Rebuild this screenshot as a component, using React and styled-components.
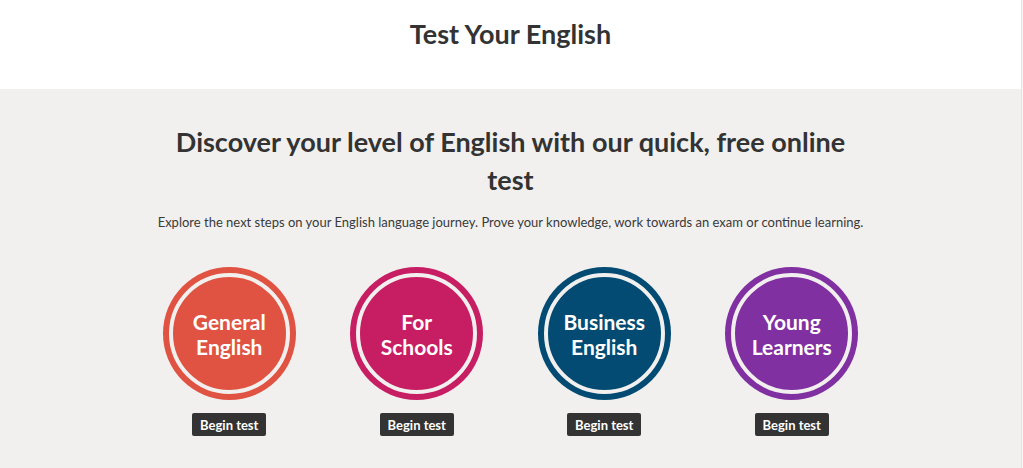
import React from 'react'
import styled, {createGlobalStyle} from 'styled-components'

const tests = [
  {lines: ['General', 'English'], color: '#e05342'},
  {lines: ['For', 'Schools'], color: '#c71d62'},
  {lines: ['Business', 'English'], color: '#034b72'},
  {lines: ['Young', 'Learners'], color: '#8030a1'},
]

const App = () => {
  return (
    <Page>
      <GlobalStyle />
      <Header>
        <Title>Test Your English</Title>
      </Header>
      <Main>
        <Heading>Discover your level of English with our quick, free online test</Heading>
        <Intro>
          Explore the next steps on your English language journey. Prove your knowledge, work towards an exam or continue learning.
        </Intro>
        <Grid>
          {tests.map((t) => (
            <Card key={t.lines.join(' ')}>
              <Circle $color={t.color}>
                <Ring>
                  <Label>
                    {t.lines[0]}<br />{t.lines[1]}
                  </Label>
                </Ring>
              </Circle>
              <Button>Begin test</Button>
            </Card>
          ))}
        </Grid>
      </Main>
    </Page>
  )
}

export default App

const GlobalStyle = createGlobalStyle`
  html, body {
    margin: 0;
    padding: 0;
    background: #f7f6f5;
  }
  body {
    font-family: Lato, "Open Sans", sans-serif;
    color: #333;
  }
`
const Page = styled.div`
  width: 1021px;
  height: 468px;
  overflow: hidden;
  border-right: 1px solid #e4e3e1;
`
const Header = styled.header`
  height: 89px;
  background: #fff;
  display: flex;
  justify-content: center;
  padding-top: 18px;
  box-sizing: border-box;
`
const Title = styled.h1`
  margin: 0;
  font-size: 27px;
  font-weight: 700;
  line-height: 32px;
  color: #333;
`
const Main = styled.main`
  background: #f1f0ee;
  height: 379px;
  display: flex;
  flex-direction: column;
  align-items: center;
  padding-top: 34px;
  box-sizing: border-box;
`
const Heading = styled.h2`
  margin: 0;
  width: 700px;
  text-align: center;
  font-size: 27px;
  line-height: 38px;
  font-weight: 700;
  color: #333;
`
const Intro = styled.p`
  margin: 13px 0 0;
  font-size: 13px;
  line-height: 20px;
  color: #3a3a3a;
`
const Grid = styled.div`
  margin-top: 35px;
  width: 750px;
  display: grid;
  grid-template-columns: repeat(4, 1fr);
`
const Card = styled.div`
  display: flex;
  flex-direction: column;
  align-items: center;
  gap: 13px;
`
const Circle = styled.div`
  width: 133px;
  height: 133px;
  border-radius: 50%;
  background: ${(p) => p.$color};
  padding: 6px;
  box-sizing: border-box;
`
const Ring = styled.div`
  width: 100%;
  height: 100%;
  border-radius: 50%;
  border: 4px solid #f1f0ee;
  box-sizing: border-box;
  display: flex;
  align-items: center;
  justify-content: center;
`
const Label = styled.div`
  color: #fff;
  font-weight: 700;
  font-size: 21px;
  line-height: 25px;
  text-align: center;
`
const Button = styled.button`
  font-family: Lato, "Open Sans", sans-serif;
  background: #333;
  color: #fff;
  border: none;
  border-radius: 2px;
  height: 23px;
  width: 74px;
  padding: 0;
  font-size: 13px;
  font-weight: 700;
  cursor: pointer;
`
